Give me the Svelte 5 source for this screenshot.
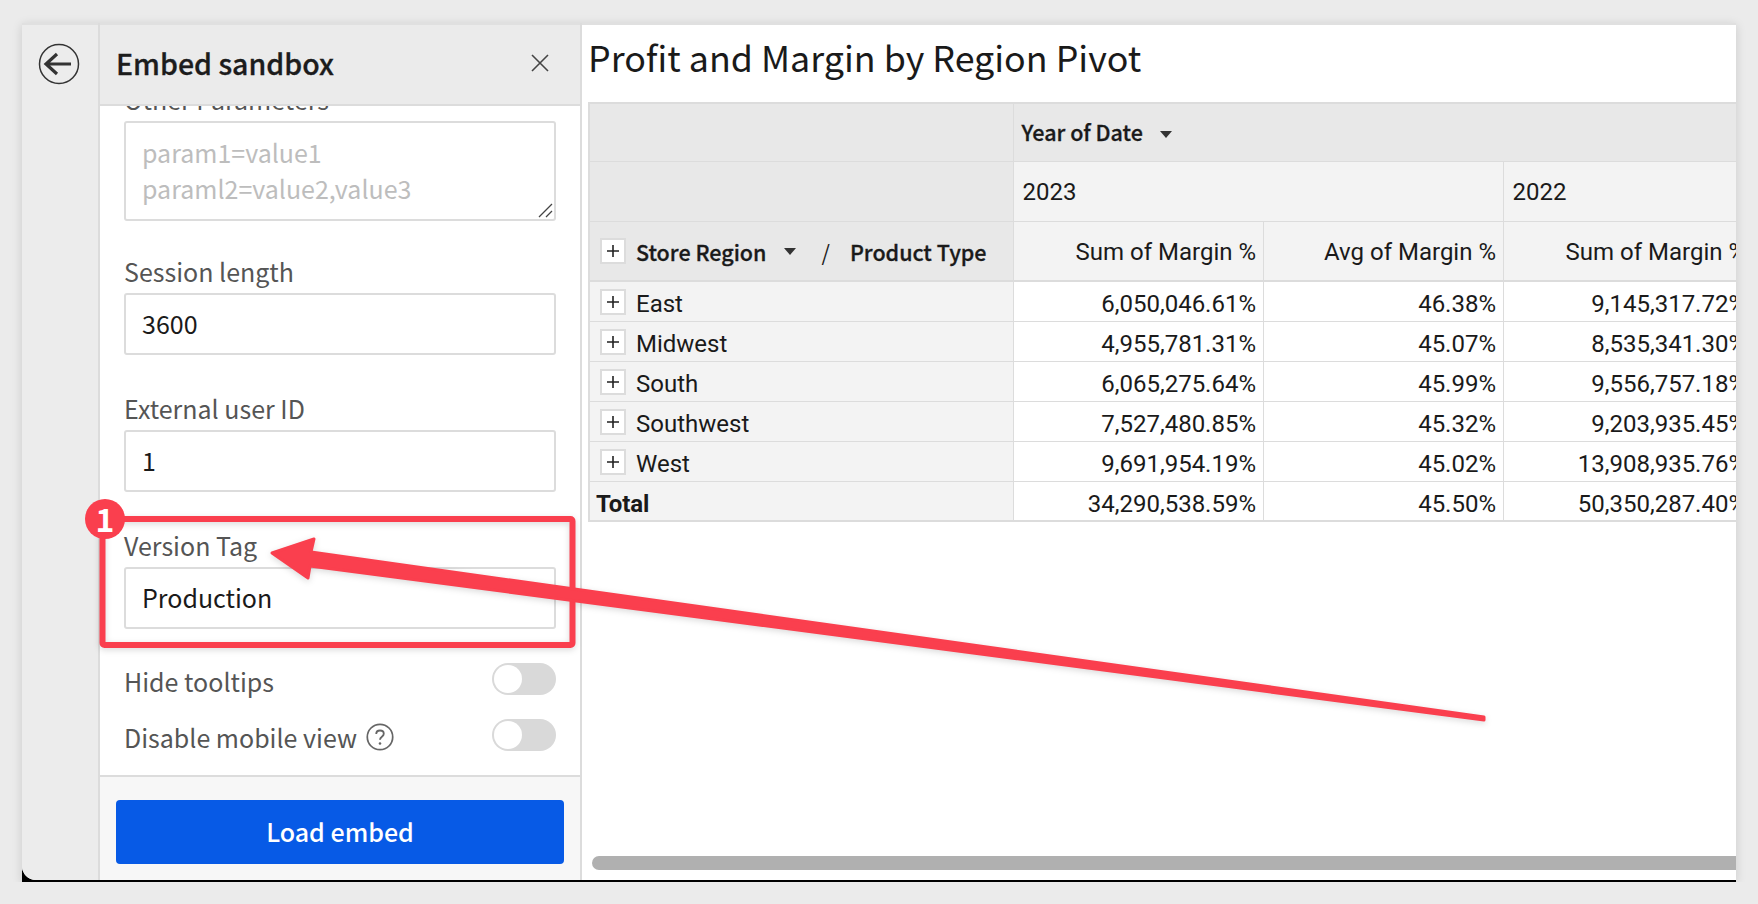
<script>
  const rows = [
    ['East', '6,050,046.61%', '46.38%', '9,145,317.72%'],
    ['Midwest', '4,955,781.31%', '45.07%', '8,535,341.30%'],
    ['South', '6,065,275.64%', '45.99%', '9,556,757.18%'],
    ['Southwest', '7,527,480.85%', '45.32%', '9,203,935.45%'],
    ['West', '9,691,954.19%', '45.02%', '13,908,935.76%']
  ];
  const total = ['Total', '34,290,538.59%', '45.50%', '50,350,287.40%'];
  const fields = [
    { label: 'Session length', value: '3600' },
    { label: 'External user ID', value: '1' },
    { label: 'Version Tag', value: 'Production' }
  ];
  const toggles = [{ label: 'Hide tooltips', help: false }, { label: 'Disable mobile view', help: true }];
</script>

{#snippet plus()}
  <span class="plus">
    <svg width="14" height="14" viewBox="0 0 14 14"><path d="M7 1v12M1 7h12" stroke="#222" stroke-width="1.6" /></svg>
  </span>
{/snippet}

{#snippet caret()}
  <svg class="caret" width="12" height="7" viewBox="0 0 12 7"><path d="M0 0h12L6 7z" fill="#333" /></svg>
{/snippet}

<div class="window">
  <div class="inner">
    <nav class="rail">
      <svg width="42" height="42" viewBox="0 0 42 42" fill="none" stroke="#333">
        <circle cx="21" cy="21" r="19.5" stroke-width="1.5" />
        <path d="M33 21H9M19 11 8 21l11 10" stroke-width="3.200" />
      </svg>
    </nav>

    <aside class="side">
      <header class="side-head">
        <h2>Embed sandbox</h2>
        <svg width="18" height="18" viewBox="0 0 18 18"><path d="M1 1l16 16M17 1 1 17" stroke="#444" stroke-width="1.6" /></svg>
      </header>
      <div class="side-body">
        <label class="lab first" for="other">Other Parameters</label>
        <div class="ta-wrap">
          <textarea id="other" placeholder={'param1=value1\nparaml2=value2,value3'}></textarea>
          <svg class="grip" width="15" height="15" viewBox="0 0 15 15"><path d="M1 14 14 1M8 14l6-6" stroke="#444" stroke-width="1.300" /></svg>
        </div>
        {#each fields as f}
          <label class="lab">{f.label}</label>
          <input value={f.value} />
        {/each}
        <div class="toggles">
          {#each toggles as t}
            <div class="toggle-row">
              <span class="lab-inline">{t.label}
                {#if t.help}
                  <svg class="help" width="28" height="28" viewBox="0 0 26 26" fill="none">
                    <circle cx="13" cy="13" r="11.8" stroke="#666" stroke-width="1.6" />
                    <path d="M9.5 10.2c0-2 1.6-3.2 3.5-3.2s3.500 1.200 3.500 3c0 2.800-3.500 2.700-3.500 5.500" stroke="#666" stroke-width="1.700" />
                    <circle cx="13" cy="19" r="1.200" fill="#666" />
                  </svg>
                {/if}
              </span>
              <span class="switch"><span class="knob"></span></span>
            </div>
          {/each}
        </div>
      </div>
      <footer class="side-foot">
        <button>Load embed</button>
      </footer>
    </aside>

    <main class="main">
      <h1>Profit and Margin by Region Pivot</h1>
      <div class="table-wrap">
        <table>
          <colgroup><col class="c1" /><col class="c2" /><col class="c3" /><col class="c4" /></colgroup>
          <thead>
            <tr class="r-top">
              <th class="dark"></th>
              <th class="dark left src year" colspan="3">Year of Date {@render caret()}</th>
            </tr>
            <tr class="r-h">
              <th class="dark"></th>
              <th class="left light reg" colspan="2">2023</th>
              <th class="left light reg">2022</th>
            </tr>
            <tr class="r-h r-last">
              <th class="dark src first-head">
                <span class="hd">
                  {@render plus()}
                  <span>Store Region</span>
                  {@render caret()}
                  <span class="slash">/</span>
                  <span>Product Type</span>
                </span>
              </th>
              <th class="light reg num">Sum of Margin %</th>
              <th class="light reg num">Avg of Margin %</th>
              <th class="light reg num">Sum of Margin %</th>
            </tr>
          </thead>
          <tbody>
            {#each rows as r}
              <tr>
                <td class="name"><span class="hd-row">{@render plus()}<span>{r[0]}</span></span></td>
                <td class="num">{r[1]}</td>
                <td class="num">{r[2]}</td>
                <td class="num">{r[3]}</td>
              </tr>
            {/each}
            <tr class="tot">
              <td class="name total">{total[0]}</td>
              <td class="num">{total[1]}</td>
              <td class="num">{total[2]}</td>
              <td class="num">{total[3]}</td>
            </tr>
          </tbody>
        </table>
      </div>
      <div class="scrollbar"></div>
    </main>
  </div>
</div>

<svg class="annot" width="1758" height="904" viewBox="0 0 1758 904">
  <rect x="102.500" y="519" width="470" height="126" rx="2" fill="none" stroke="#fa3f4e" stroke-width="6" />
  <path d="M272 553 314 539 311 552 1484 717 1484 720 310 566 308 578Z" fill="#fa3f4e" stroke="#fa3f4e" stroke-width="3" stroke-linejoin="round" />
</svg>
<div class="badge">1</div>

<style>
  :global(body) {
    margin: 0;
    background: #ebebeb;
    overflow: hidden;
  }
  .window {
    position: relative;
    margin: 23px 22px 0;
    width: 1714px;
    height: 859px;
    background: #000;
    box-shadow: 0 2px 10px rgba(0, 0, 0, 0.14);
  }
  .inner {
    display: flex;
    height: 857px;
    background: #fff;
    border-bottom-left-radius: 14px;
    overflow: hidden;
    font-family: 'Noto Sans CJK SC', 'Noto Sans', sans-serif;
  }
  .rail {
    width: 76px;
    flex: none;
    background: #ececec;
    border-top: 2px solid #e0e0e0;
    box-sizing: border-box;
    padding: 18px 0 0 16px;
  }
  .rail svg { display: block; }
  .side {
    width: 484px;
    flex: none;
    box-sizing: border-box;
    display: flex;
    flex-direction: column;
    border-left: 2px solid #dcdcdc;
    border-right: 2px solid #dcdcdc;
    background: #fff;
  }
  .side-head {
    box-sizing: border-box;
    height: 83px;
    flex: none;
    display: flex;
    align-items: center;
    justify-content: space-between;
    padding: 0 31px 4px 16px;
    background: #ebebeb;
    border-bottom: 2px solid #dcdcdc;
    border-top: 2px solid #e0e0e0;
    z-index: 1;
  }
  h2 {
    margin: 0;
    font-size: 28.500px;
    font-weight: 500;
    color: #1c1c1c;
    -webkit-text-stroke: 0.3px #1c1c1c;
  }
  .side-body {
    flex: 1;
    overflow: hidden;
    padding: 0 24px 0 24px;
    display: flex;
    flex-direction: column;
  }
  .lab {
    display: block;
    font-size: 25px;
    line-height: 36px;
    color: #555;
    margin: 35px 0 4px;
    height: 36px;
  }
  .lab.first { margin-top: -25px; }
  textarea, input {
    box-sizing: border-box;
    width: 100%;
    flex: none;
    display: block;
    border: 2px solid #dcdcdc;
    border-radius: 3px;
    margin: 0;
    padding: 0 16px;
    font-family: inherit;
    font-size: 25px;
    color: #1a1a1a;
    background: #fff;
    outline: none;
  }
  .ta-wrap { position: relative; height: 97px; flex: none; }
  textarea {
    height: 100px;
    padding-top: 11px;
    line-height: 36px;
    resize: none;
    overflow: hidden;
  }
  textarea::placeholder { color: #bdbdbd; opacity: 1; }
  .grip { position: absolute; right: 3px; bottom: 0; }
  input { height: 62px; padding-bottom: 2px; }
  .toggles { margin-top: 34px; display: flex; flex-direction: column; gap: 24px; }
  .toggle-row {
    display: flex;
    justify-content: space-between;
    align-items: flex-start;
    height: 32px;
  }
  .lab-inline {
    font-size: 25px;
    line-height: 36px;
    color: #555;
    display: flex;
    align-items: center;
    gap: 9px;
  }
  .help { flex: none; }
  .switch {
    width: 64px;
    height: 32px;
    border-radius: 16px;
    background: #d9d9d9;
    position: relative;
    flex: none;
  }
  .knob {
    position: absolute;
    left: 2px;
    top: 2px;
    width: 28px;
    height: 28px;
    background: #fff;
    border-radius: 50%;
  }
  .side-foot {
    flex: none;
    height: 105px;
    box-sizing: border-box;
    background: #f7f7f7;
    border-top: 2px solid #dcdcdc;
    padding: 23px 16px 0 16px;
  }
  button {
    width: 100%;
    height: 64px;
    border: 0;
    border-radius: 4px;
    padding: 0 0 2px;
    background: #075ae6;
    color: #fff;
    font-family: inherit;
    font-size: 25px;
    font-weight: 500;
  }
  .main {
    flex: 1;
    min-width: 0;
    display: flex;
    flex-direction: column;
    overflow: hidden;
    padding-left: 6px;
    border-top: 2px solid #e0e0e0;
  }
  h1 {
    margin: 0;
    height: 77px;
    font-size: 35.800px;
    font-weight: 400;
    line-height: 62px;
    color: #1a1a1a;
    white-space: nowrap;
  }
  .table-wrap { flex: 1; min-height: 0; overflow: hidden; }
  table {
    table-layout: fixed;
    border-collapse: collapse;
    width: 1164px;
    font-family: Roboto, sans-serif;
    font-size: 24px;
    color: #1a1a1a;
    border-top: 2px solid #dcdcdc;
    border-left: 2px solid #dcdcdc;
    border-bottom: 2px solid #dcdcdc;
  }
  .c1 { width: 424px; }
  .c2 { width: 250px; }
  .c3 { width: 240px; }
  .c4 { width: 250px; }
  th, td {
    border: 1px solid #dcdcdc;
    padding: 2px 6.500px 0 9px;
    font-weight: 400;
    white-space: nowrap;
    overflow: hidden;
  }
  tr.r-top { height: 58px; }
  tr.r-h { height: 60px; }
  tbody tr { height: 40px; }
  tbody td { padding-top: 5px; }
  tbody td.name { padding-top: 2px; }
  .dark { background: #e8e8e8; }
  .light { background: #f3f3f3; }
  .left { text-align: left; }
  .src {
    font-family: 'Noto Sans CJK SC', sans-serif;
    font-weight: 500;
    font-size: 21.500px;
    -webkit-text-stroke: 0.3px #1a1a1a;
  }
  .src .caret { -webkit-text-stroke: 0; }
  .year { padding-top: 0; padding-bottom: 2px; padding-left: 8px; }
  .reg { font-weight: 400; }
  .num { text-align: right; }
  .r-last th { border-bottom: 2px solid #dcdcdc; }
  .hd, .hd-row { display: flex; align-items: center; }
  .first-head { padding-left: 10px; padding-top: 1px; padding-bottom: 0; }
  .hd > span:nth-child(2) { margin-left: 10px; }
  .hd .caret { margin: 0 0 0 18px; }
  .slash { margin: 0 20px 0 25px; font-weight: 400; -webkit-text-stroke: 0; }
  .caret { display: inline-block; vertical-align: middle; margin-left: 12px; }
  .plus {
    box-sizing: border-box;
    width: 26px;
    height: 26px;
    flex: none;
    display: inline-flex;
    align-items: center;
    justify-content: center;
    background: #fff;
    border: 2px solid #dcdcdc;
  }
  .plus svg { display: block; }
  .name { background: #f3f3f3; padding-left: 10px; }
  .hd-row > span:last-child { margin-left: 10px; padding-top: 3px; }
  tbody td.total { font-weight: 700; padding: 6px 0 0 6px; letter-spacing: -0.1px; }
  .tot .num { padding-top: 6px; }
  .scrollbar {
    flex: none;
    height: 14px;
    margin: 0 -20px 10px 4px;
    background: #b0b0b0;
    border-radius: 7px 0 0 7px;
  }
  .annot {
    position: absolute;
    left: 0;
    top: 0;
    pointer-events: none;
    filter: drop-shadow(0 2px 3px rgba(0, 0, 0, 0.15));
  }
  .badge {
    position: absolute;
    left: 85px;
    top: 499px;
    width: 40px;
    height: 40px;
    border-radius: 50%;
    background: #fa3f4e;
    color: #fff;
    font: 700 32px/38px 'Noto Sans CJK SC', sans-serif;
    text-align: center;
  }
</style>
